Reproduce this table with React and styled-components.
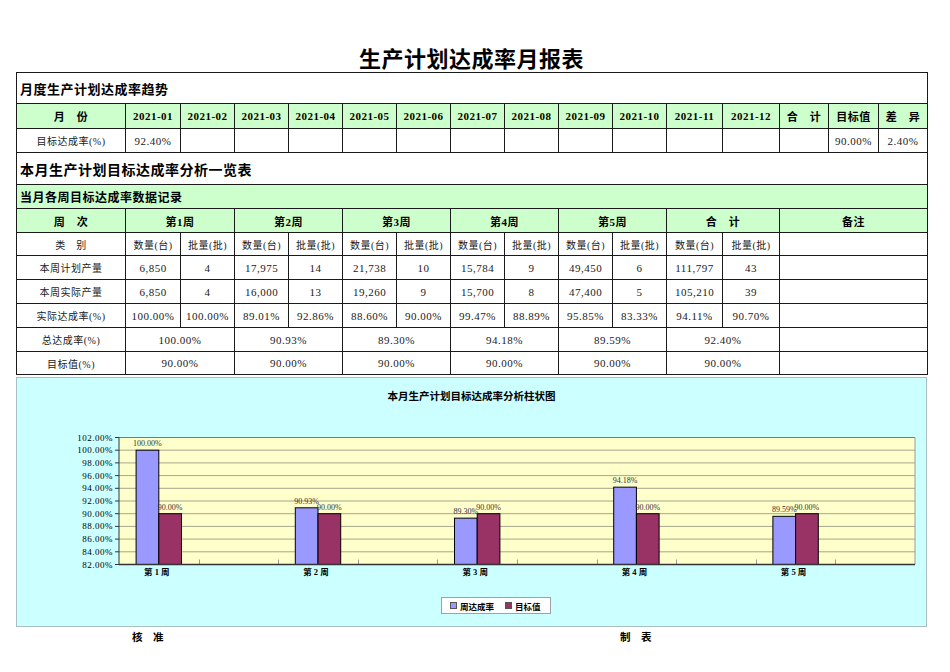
import styled, { createGlobalStyle } from "styled-components";

const GlobalStyle = createGlobalStyle`
  body {
    margin: 0;
    background: #fff;
    color: #000;
    font-family: "Liberation Serif", "Noto Sans CJK SC", serif;
  }
`;

const COLS = [109, 55, 54, 54, 54, 54, 54, 54, 54, 54, 54, 56, 57, 49, 50, 49];
const MONTHS = Array.from({ length: 12 }, (_, i) => `2021-${String(i + 1).padStart(2, "0")}`);

const PLAN = ["6,850", "4", "17,975", "14", "21,738", "10", "15,784", "9", "49,450", "6", "111,797", "43"];
const ACTUAL = ["6,850", "4", "16,000", "13", "19,260", "9", "15,700", "8", "47,400", "5", "105,210", "39"];
const RATE = ["100.00%", "100.00%", "89.01%", "92.86%", "88.60%", "90.00%", "99.47%", "88.89%", "95.85%", "83.33%", "94.11%", "90.70%"];
const TOTAL = ["100.00%", "90.93%", "89.30%", "94.18%", "89.59%", "92.40%"];

const WEEKS = [
  { name: "第 1 周", rate: 100, target: 90, label: "100.00%" },
  { name: "第 2 周", rate: 90.93, target: 90, label: "90.93%" },
  { name: "第 3 周", rate: 89.3, target: 90, label: "89.30%" },
  { name: "第 4 周", rate: 94.18, target: 90, label: "94.18%" },
  { name: "第 5 周", rate: 89.59, target: 90, label: "89.59%" },
];

const BLUE = "#9999ff";
const PLUM = "#993366";

export default function App() {
  return (
    <>
      <GlobalStyle />
      <Page>
        <Title>生产计划达成率月报表</Title>
        <Sheet>
          <colgroup>
            {COLS.map((w, i) => (
              <col key={i} style={{ width: w }} />
            ))}
          </colgroup>
          <tbody>
            <Row $h={31}>
              <Section colSpan={16} $size={13}>月度生产计划达成率趋势</Section>
            </Row>
            <Row $h={25}>
              <Cell $head>月　份</Cell>
              {MONTHS.map((m) => (
                <Cell $head key={m}>{m}</Cell>
              ))}
              <Cell $head>合　计</Cell>
              <Cell $head>目标值</Cell>
              <Cell $head>差　异</Cell>
            </Row>
            <Row $h={24}>
              <Cell $cjk>目标达成率(%)</Cell>
              <Cell>92.40%</Cell>
              {Array.from({ length: 12 }, (_, i) => (
                <Cell key={i} />
              ))}
              <Cell>90.00%</Cell>
              <Cell>2.40%</Cell>
            </Row>
            <Row $h={32}>
              <Section colSpan={16} $size={14}>本月生产计划目标达成率分析一览表</Section>
            </Row>
            <Row $h={24}>
              <Section colSpan={16} $size={12} $green>当月各周目标达成率数据记录</Section>
            </Row>
            <Row $h={24}>
              <Cell $head>周　次</Cell>
              {["第1周", "第2周", "第3周", "第4周", "第5周"].map((w) => (
                <Cell $head colSpan={2} key={w}>{w}</Cell>
              ))}
              <Cell $head colSpan={2}>合　计</Cell>
              <Cell $head colSpan={3}>备注</Cell>
            </Row>
            <Row $h={23}>
              <Cell $cjk>类　别</Cell>
              {Array.from({ length: 6 }, (_, i) => [
                <Cell $cjk key={`q${i}`}>数量(台)</Cell>,
                <Cell $cjk key={`b${i}`}>批量(批)</Cell>,
              ])}
              <Cell colSpan={3} />
            </Row>
            <DataRow label="本周计划产量" values={PLAN} />
            <DataRow label="本周实际产量" values={ACTUAL} />
            <DataRow label="实际达成率(%)" values={RATE} />
            <Row $h={24}>
              <Cell $cjk>总达成率(%)</Cell>
              {TOTAL.map((v, i) => (
                <Cell colSpan={2} key={i}>{v}</Cell>
              ))}
              <Cell colSpan={3} />
            </Row>
            <Row $h={23}>
              <Cell $cjk>目标值(%)</Cell>
              {TOTAL.map((_, i) => (
                <Cell colSpan={2} key={i}>90.00%</Cell>
              ))}
              <Cell colSpan={3} />
            </Row>
          </tbody>
        </Sheet>

        <ChartBox>
          <ChartTitle>本月生产计划目标达成率分析柱状图</ChartTitle>
          <BarChart />
          <Legend>
            <LegendItem>
              <Swatch $color={BLUE} />
              周达成率
            </LegendItem>
            <LegendItem>
              <Swatch $color={PLUM} />
              目标值
            </LegendItem>
          </Legend>
        </ChartBox>

        <Footer>
          <Sign>核　准</Sign>
          <Sign>制　表</Sign>
        </Footer>
      </Page>
    </>
  );
}

const DataRow = ({ label, values }) => (
  <Row $h={24}>
    <Cell $cjk>{label}</Cell>
    {values.map((v, i) => (
      <Cell key={i}>{v}</Cell>
    ))}
    <Cell colSpan={3} />
  </Row>
);

// plot area in page coordinates
const X0 = 119;
const X1 = 915;
const YT = 436.5;
const YB = 563.5;
const STEP = (X1 - X0) / 10;
const BAR = 22.7;
const yOf = (v) => YB - ((v - 82) * (YB - YT)) / 20;

const BarChart = () => {
  const levels = Array.from({ length: 11 }, (_, k) => 82 + k * 2);
  return (
    <Plot width={909} height={155} viewBox="17 425 909 155">
      <rect x={X0} y={YT} width={X1 - X0} height={YB - YT} fill="#ffffcc" />
      {levels.slice(1, 10).map((v) => (
        <line key={v} x1={X0} x2={X1} y1={yOf(v)} y2={yOf(v)} stroke="#a6a68c" />
      ))}
      <line x1={X0} x2={X1} y1={YT} y2={YT} stroke="#7a7a7a" />
      <line x1={X1} x2={X1} y1={YT} y2={YB} stroke="#9a9a9a" />
      {Array.from({ length: 9 }, (_, i) => {
        const x = Math.round(X0 + STEP * (i + 1)) + 0.5;
        return <line key={i} x1={x} x2={x} y1={YB - 5} y2={YB} stroke="#9a9a9a" />;
      })}
      {levels.map((v) => (
        <g key={v}>
          <line x1={115} x2={X0} y1={yOf(v)} y2={yOf(v)} stroke="#333" />
          <AxisText x={113} y={yOf(v) + 3} textAnchor="end">
            {v.toFixed(2)}%
          </AxisText>
        </g>
      ))}
      {WEEKS.map((w, i) => {
        const c = X0 + STEP * (i * 2 + 0.5);
        const yb = yOf(w.rate);
        const yr = yOf(w.target);
        return (
          <g key={w.name}>
            <rect x={c - BAR} y={yb} width={BAR} height={YB - yb} fill={BLUE} stroke="#000" />
            <rect x={c} y={yr} width={BAR} height={YB - yr} fill={PLUM} stroke="#000" />
            <ValueText x={c - BAR / 2} y={yb - 4} textAnchor="middle">{w.label}</ValueText>
            <ValueText x={c + BAR / 2} y={yr - 4} textAnchor="middle">90.00%</ValueText>
            <CatText x={c - 2} y={574} textAnchor="middle">{w.name}</CatText>
          </g>
        );
      })}
      <line x1={X0} x2={X0} y1={YT} y2={YB} stroke="#333" />
      <line x1={X0} x2={X1} y1={YB} y2={YB} stroke="#333" strokeWidth={1.3} />
    </Plot>
  );
};

const Page = styled.div`
  width: 911px;
  padding-left: 16px;
`;

const Title = styled.h1`
  margin: 0;
  padding-top: 42px;
  height: 30px;
  line-height: 30px;
  text-align: center;
  font-family: "Noto Sans CJK SC", sans-serif;
  font-size: 22px;
  font-weight: 700;
  letter-spacing: 0.5px;
`;

const Sheet = styled.table`
  width: 911px;
  table-layout: fixed;
  border-collapse: collapse;
  border: 1px solid #000;
`;

const Row = styled.tr`
  height: ${(p) => p.$h}px;
`;

const Cell = styled.td`
  border: 1px solid #1a1a1a;
  padding: 0;
  text-align: center;
  vertical-align: middle;
  white-space: nowrap;
  overflow: hidden;
  font-size: ${(p) => (p.$cjk ? 10 : 11)}px;
  letter-spacing: 0.5px;
  font-weight: ${(p) => (p.$head ? 700 : 400)};
  background: ${(p) => (p.$head ? "#ccffcc" : "#fff")};
  color: ${(p) => (p.$head ? "#000" : "#1a1a1a")};
`;

const Section = styled.td`
  border: 1px solid #1a1a1a;
  padding: 0 0 0 3px;
  text-align: left;
  vertical-align: middle;
  font-family: "Noto Sans CJK SC", sans-serif;
  font-size: ${(p) => p.$size}px;
  font-weight: 700;
  letter-spacing: 0.5px;
  background: ${(p) => (p.$green ? "#ccffcc" : "#fff")};
`;

const ChartBox = styled.div`
  box-sizing: border-box;
  width: 911px;
  height: 250px;
  margin-top: 2px;
  border: 1px solid #a9bfc0;
  background: #ccffff;
  display: flex;
  flex-direction: column;
  align-items: center;
`;

const ChartTitle = styled.div`
  margin-top: 11px;
  line-height: 14px;
  font-family: "Noto Sans CJK SC", sans-serif;
  font-size: 10.5px;
  font-weight: 700;
`;

const Plot = styled.svg`
  display: block;
  margin-top: 23px;
  flex: none;
`;

const AxisText = styled.text`
  font-family: "Liberation Serif", serif;
  font-size: 9px;
  letter-spacing: 0.5px;
  fill: #000;
`;

const ValueText = styled.text`
  font-family: "Liberation Serif", serif;
  font-size: 8px;
  fill: #333;
`;

const CatText = styled.text`
  font-family: "Liberation Serif", "Noto Sans CJK SC", serif;
  font-size: 8.5px;
  font-weight: 700;
  fill: #000;
`;

const Legend = styled.div`
  align-self: flex-start;
  margin: 16px 0 0 424px;
  box-sizing: border-box;
  height: 17px;
  padding: 0 9px 0 8px;
  display: flex;
  align-items: center;
  gap: 11px;
  background: #fff;
  border: 1px solid #a0a0a0;
`;

const LegendItem = styled.span`
  display: flex;
  align-items: center;
  gap: 3px;
  font-family: "Noto Sans CJK SC", sans-serif;
  font-size: 8.5px;
  font-weight: 700;
`;

const Swatch = styled.i`
  display: block;
  width: 5px;
  height: 5px;
  background: ${(p) => p.$color};
  border: 0.5px solid #555;
`;

const Footer = styled.div`
  display: grid;
  grid-template-columns: 488px auto;
  padding-left: 116px;
  margin-top: 3px;
  line-height: 14px;
`;

const Sign = styled.span`
  font-family: "Noto Sans CJK SC", sans-serif;
  font-size: 10.5px;
  font-weight: 700;
`;
